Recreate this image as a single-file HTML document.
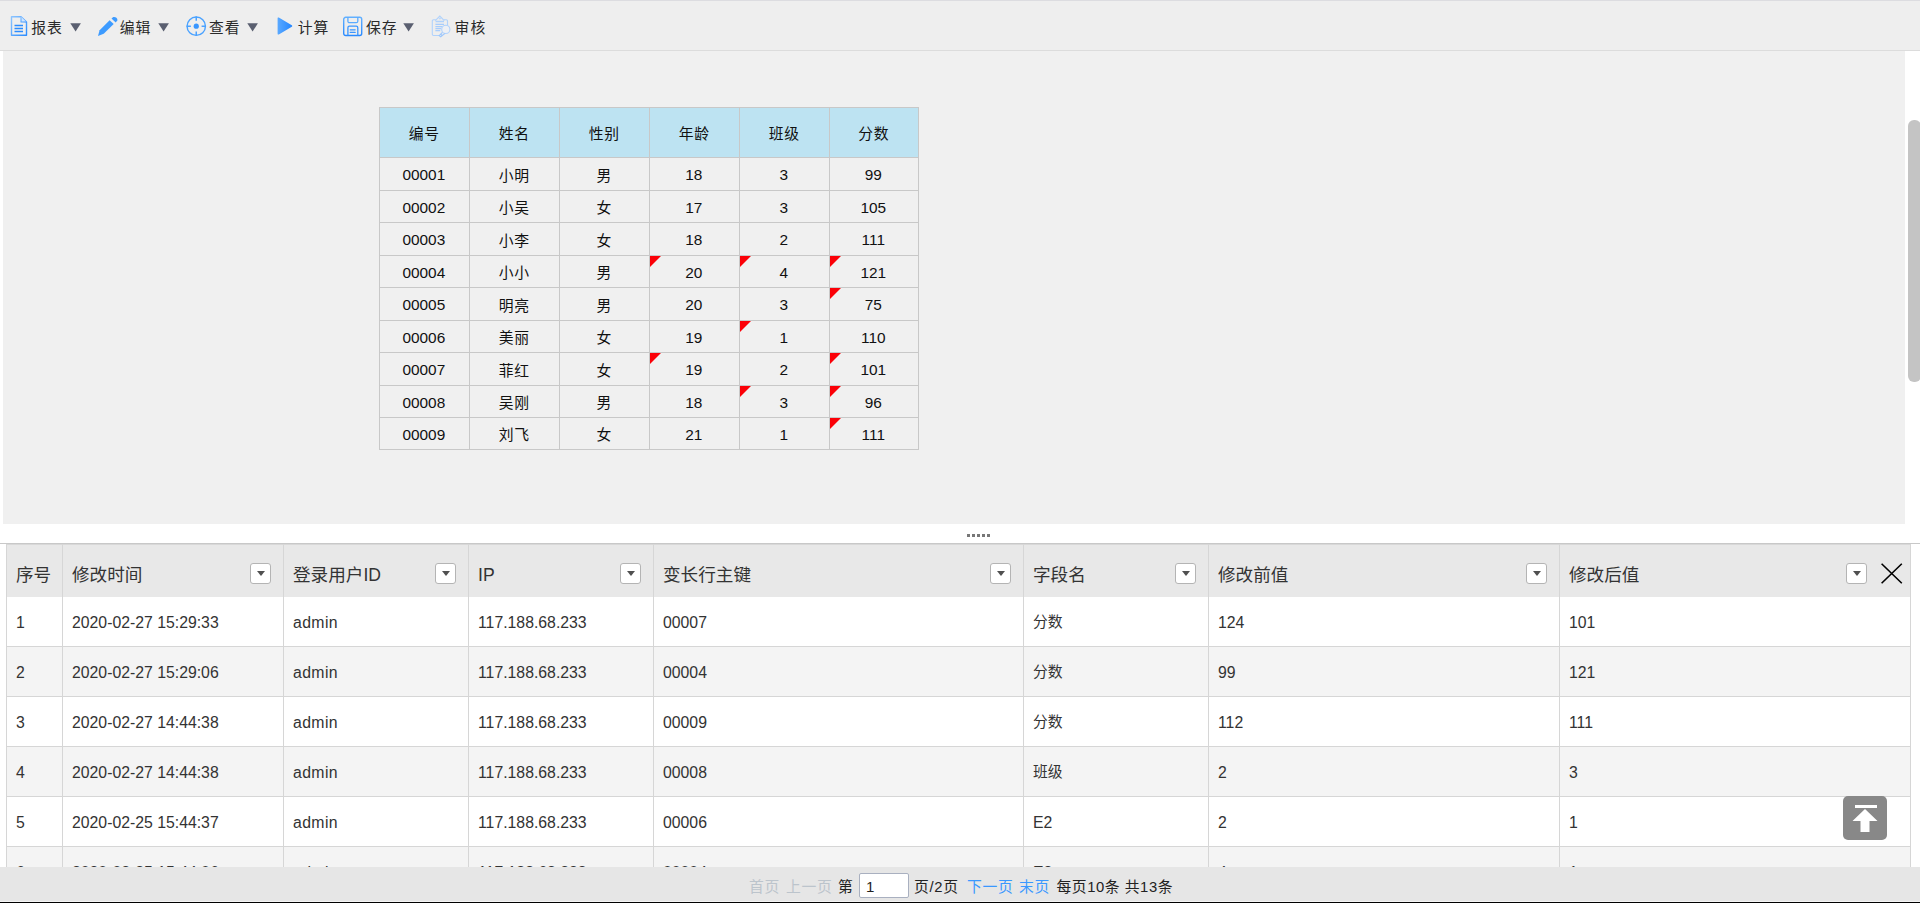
<!DOCTYPE html>
<html lang="zh-CN"><head><meta charset="utf-8"><title>报表</title>
<style>
*{box-sizing:border-box;margin:0;padding:0}
html,body{width:1920px;height:903px;overflow:hidden;background:#fff}
body{position:relative;font-family:"Liberation Sans","Noto Sans CJK SC",sans-serif;color:#222;font-size:15.4px}
.abs{position:absolute}
#topline{left:0;top:0;width:1920px;height:1px;background:#dcdce0}
#toolbar{left:0;top:1px;width:1920px;height:49px;background:#eeeeee}
#tbline{left:0;top:50px;width:1920px;height:1px;background:#dcdcdc}
.tbtxt{position:absolute;top:17.2px;height:22px;line-height:22px;font-size:14.8px;letter-spacing:1px;color:#2a2a2a;white-space:nowrap}
.tbarr{position:absolute;top:23px;width:12px;height:9px}
.ico{position:absolute}
#sheet{left:3px;top:51px;width:1902px;height:473px;background:#f0f0f0}
#thumb{left:1908px;top:120px;width:12.5px;height:262px;border-radius:6px;background:#c4c4c4}
.vl{position:absolute;width:1px;background:#c8c8c8}
.hl{position:absolute;height:1px;background:#c8c8c8}
.hc{position:absolute;background:#bde3f2}
.sc{position:absolute;text-align:center;font-size:14.8px;letter-spacing:.7px;text-indent:.7px;color:#111;white-space:nowrap}
.sc.n{font-size:15.4px;letter-spacing:0;text-indent:0}
.tri{position:absolute;width:0;height:0;border-top:11px solid #fb0007;border-right:11px solid transparent}
#dots{left:967px;top:534px}
#gline{left:0;top:543px;width:1920px;height:1px;background:#c8c8c8}
#gline2{left:6px;top:544px;width:1905px;height:1px;background:#d8d8d8}
#ghead{left:6px;top:544px;width:1905px;height:53px;background:#e8e8e8}
.gh{position:absolute;top:563px;height:24px;line-height:24px;font-size:17.6px;color:#333;white-space:nowrap}
.fb{position:absolute;top:563px;width:21px;height:21px;background:#fff;border:1px solid #b4b4b4;border-radius:3px}
.fb:after{content:"";position:absolute;left:6.2px;top:7.4px;width:0;height:0;border-left:4.7px solid transparent;border-right:4.7px solid transparent;border-top:5.6px solid #505050}
.row{position:absolute;left:7px;width:1903px;height:49px}
.row.alt{background:#f4f4f4}
.gc{position:absolute;height:22px;line-height:22px;font-size:15.8px;color:#333;white-space:nowrap}
.gc.c{font-size:14.8px;letter-spacing:.7px}
.gv{position:absolute;width:1px;background:#d6d6d6}
.gh1{position:absolute;height:1px;background:#d6d6d6;left:6px;width:1905px}
#footer{left:0;top:867px;width:1920px;height:34px;background:#e6e6e6}
#fwhite{left:0;top:901px;width:1920px;height:1px;background:#f4f4f4}
#fblack{left:0;top:902px;width:1920px;height:1px;background:#000}
.ft{position:absolute;top:876.4px;height:22px;line-height:22px;font-size:14.8px;letter-spacing:.7px;white-space:nowrap;color:#222}
#pginp{left:859px;top:873px;width:50px;height:25px;background:#fff;border:1px solid #a9b0c0;border-radius:2px;outline:none;font-family:"Liberation Sans","Noto Sans CJK SC",sans-serif;font-size:15px;color:#222;padding:2px 0 0 6px;line-height:20px}
#totop{left:1843px;top:796px;width:44px;height:44px;border-radius:5px;background:#888}
</style></head>
<body>
<header>
<div class="abs" id="topline"></div><div class="abs" id="toolbar"></div><div class="abs" id="tbline"></div>
<svg class="ico" style="left:9.6px;top:16.2px" width="18" height="20" viewBox="0 0 18 20"><defs><linearGradient id="g1" x1="0" y1="0" x2="1" y2="1"><stop offset="0" stop-color="#8cc4ff"/><stop offset="1" stop-color="#2b8cff"/></linearGradient></defs><path d="M1.5 0.8h9.5l5.5 5.2v13.2h-15z" fill="none" stroke="url(#g1)" stroke-width="1.4" stroke-linejoin="round"/><path d="M11 0.8v5.2h5.5" fill="#cfe5ff" stroke="url(#g1)" stroke-width="1.2" stroke-linejoin="round"/><path d="M4.5 9.5h8.5M4.5 12.5h8.5M4.5 15.5h8.5" stroke="#2b8cff" stroke-width="1.3"/></svg>
<svg class="ico" style="left:97px;top:16px" width="22" height="21" viewBox="0 0 22 21"><path d="M12.6 4.3L16.7 8 6.7 17.7 1 20 2.6 14.3z" fill="#3d9bff"/><path d="M14.5 2.5L16.3 1Q20 0.6 20.5 4.2L18.7 6.4z" fill="#3d9bff"/></svg>
<svg class="ico" style="left:186px;top:16px" width="21" height="21" viewBox="0 0 21 21"><circle cx="10.25" cy="10.15" r="9.2" fill="none" stroke="#4aa2ff" stroke-width="1.4"/><path d="M10.25 0.6v4.2M10.25 15.5v4.2M0.7 10.15h4.2M15.6 10.15h4.2" stroke="#4aa2ff" stroke-width="1.5"/><circle cx="10.25" cy="10.15" r="2.6" fill="#3896ff"/></svg>
<svg class="ico" style="left:277px;top:17.3px" width="16" height="18" viewBox="0 0 16 18"><defs><linearGradient id="g4" x1="0" y1="0" x2="1" y2="0"><stop offset="0" stop-color="#5aa9ff"/><stop offset="1" stop-color="#2486ff"/></linearGradient></defs><path d="M0.6 1.3a0.8 0.8 0 0 1 1.2-.7l13 7.7a0.8 0.8 0 0 1 0 1.4l-13 7.7a0.8 0.8 0 0 1-1.2-.7z" fill="url(#g4)"/></svg>
<svg class="ico" style="left:343px;top:16px" width="20" height="21" viewBox="0 0 20 21"><defs><linearGradient id="g5" x1="0" y1="0" x2="0" y2="1"><stop offset="0" stop-color="#62b0ff"/><stop offset="1" stop-color="#2a8aff"/></linearGradient></defs><rect x="0.7" y="1.3" width="18" height="18.2" rx="2" fill="none" stroke="url(#g5)" stroke-width="1.4"/><path d="M4.9 1.3v3.9a1.5 1.5 0 0 0 1.5 1.5h6.9a1.5 1.5 0 0 0 1.5-1.5V1.3" fill="none" stroke="#5aabff" stroke-width="1.3"/><path d="M4.9 19.5v-7.8a1.5 1.5 0 0 1 1.5-1.5h6.9a1.5 1.5 0 0 1 1.5 1.5v7.8" fill="none" stroke="#3a96ff" stroke-width="1.3"/><path d="M7.2 13.8h5M7.2 16.4h5" stroke="#3a96ff" stroke-width="1.2" stroke-linecap="round"/></svg>
<svg class="ico" style="left:431px;top:15px" width="22" height="23" viewBox="0 0 22 23" opacity="0.85"><g fill="none" stroke="#a6ceff" stroke-width="1.1"><path d="M4.8 4.7H2.5a1.2 1.2 0 0 0-1.2 1.2v13.4a1.2 1.2 0 0 0 1.2 1.2h6"/><path d="M13 4.7h2.3a1.2 1.2 0 0 1 1.2 1.2v4"/><path d="M4.3 5.7L8.8 1.1l4.5 4.6"/><path d="M4.6 6.5h8.4" stroke-width="1.5"/><path d="M8 3.8l.8-1 .8 1z" stroke-width=".8"/><path d="M4.4 9.4h8.6M4.4 11.6h6.6M4.4 13.6h5.6M4.4 15.6h4.8" stroke="#9cc8ff"/><circle cx="14.8" cy="14.4" r="4.1" fill="#eef1f6"/><path d="M11.4 17.3l-3.2 3.3 1.5 1.1 4.3-3.3M9.6 19.2l1.6 1.2" stroke="#8fc0ff"/></g></svg>
<div class="tbtxt" style="left:31.3px">报表</div>
<div class="tbtxt" style="left:119.8px">编辑</div>
<div class="tbtxt" style="left:209px">查看</div>
<div class="tbtxt" style="left:297.8px">计算</div>
<div class="tbtxt" style="left:366px">保存</div>
<div class="tbtxt" style="left:454.6px">审核</div>
<svg class="tbarr" style="left:70px" viewBox="0 0 12 9"><path d="M0.3 0.2h10.6L5.6 8.6z" fill="#5a5f70"/></svg>
<svg class="tbarr" style="left:158px" viewBox="0 0 12 9"><path d="M0.3 0.2h10.6L5.6 8.6z" fill="#5a5f70"/></svg>
<svg class="tbarr" style="left:247px" viewBox="0 0 12 9"><path d="M0.3 0.2h10.6L5.6 8.6z" fill="#5a5f70"/></svg>
<svg class="tbarr" style="left:403px" viewBox="0 0 12 9"><path d="M0.3 0.2h10.6L5.6 8.6z" fill="#5a5f70"/></svg>
</header>
<main>
<div class="abs" id="sheet"></div><div class="abs" id="thumb"></div>
<div class="hc" style="left:379px;top:107px;width:539px;height:50px"></div>
<div class="vl" style="left:379px;top:107px;height:343px"></div>
<div class="vl" style="left:469px;top:107px;height:343px"></div>
<div class="vl" style="left:559px;top:107px;height:343px"></div>
<div class="vl" style="left:649px;top:107px;height:343px"></div>
<div class="vl" style="left:739px;top:107px;height:343px"></div>
<div class="vl" style="left:829px;top:107px;height:343px"></div>
<div class="vl" style="left:918px;top:107px;height:343px"></div>
<div class="hl" style="left:379px;top:107px;width:540px"></div>
<div class="hl" style="left:379px;top:157px;width:540px"></div>
<div class="hl" style="left:379px;top:190px;width:540px"></div>
<div class="hl" style="left:379px;top:222px;width:540px"></div>
<div class="hl" style="left:379px;top:255px;width:540px"></div>
<div class="hl" style="left:379px;top:287px;width:540px"></div>
<div class="hl" style="left:379px;top:320px;width:540px"></div>
<div class="hl" style="left:379px;top:352px;width:540px"></div>
<div class="hl" style="left:379px;top:385px;width:540px"></div>
<div class="hl" style="left:379px;top:417px;width:540px"></div>
<div class="hl" style="left:379px;top:449px;width:540px"></div>
<div class="sc" style="left:379.3px;top:108px;width:89px;height:49px;line-height:53px">编号</div>
<div class="sc" style="left:469.3px;top:108px;width:89px;height:49px;line-height:53px">姓名</div>
<div class="sc" style="left:559.3px;top:108px;width:89px;height:49px;line-height:53px">性别</div>
<div class="sc" style="left:649.3px;top:108px;width:89px;height:49px;line-height:53px">年龄</div>
<div class="sc" style="left:739.3px;top:108px;width:89px;height:49px;line-height:53px">班级</div>
<div class="sc" style="left:829.3px;top:108px;width:88px;height:49px;line-height:53px">分数</div>
<div class="sc n" style="left:379.3px;top:158px;width:89px;height:32px;line-height:34px">00001</div>
<div class="sc" style="left:469.3px;top:158px;width:89px;height:32px;line-height:36px">小明</div>
<div class="sc" style="left:559.3px;top:158px;width:89px;height:32px;line-height:36px">男</div>
<div class="sc n" style="left:649.3px;top:158px;width:89px;height:32px;line-height:34px">18</div>
<div class="sc n" style="left:739.3px;top:158px;width:89px;height:32px;line-height:34px">3</div>
<div class="sc n" style="left:829.3px;top:158px;width:88px;height:32px;line-height:34px">99</div>
<div class="sc n" style="left:379.3px;top:191px;width:89px;height:31px;line-height:33px">00002</div>
<div class="sc" style="left:469.3px;top:191px;width:89px;height:31px;line-height:35px">小吴</div>
<div class="sc" style="left:559.3px;top:191px;width:89px;height:31px;line-height:35px">女</div>
<div class="sc n" style="left:649.3px;top:191px;width:89px;height:31px;line-height:33px">17</div>
<div class="sc n" style="left:739.3px;top:191px;width:89px;height:31px;line-height:33px">3</div>
<div class="sc n" style="left:829.3px;top:191px;width:88px;height:31px;line-height:33px">105</div>
<div class="sc n" style="left:379.3px;top:223px;width:89px;height:32px;line-height:34px">00003</div>
<div class="sc" style="left:469.3px;top:223px;width:89px;height:32px;line-height:36px">小李</div>
<div class="sc" style="left:559.3px;top:223px;width:89px;height:32px;line-height:36px">女</div>
<div class="sc n" style="left:649.3px;top:223px;width:89px;height:32px;line-height:34px">18</div>
<div class="sc n" style="left:739.3px;top:223px;width:89px;height:32px;line-height:34px">2</div>
<div class="sc n" style="left:829.3px;top:223px;width:88px;height:32px;line-height:34px">111</div>
<div class="sc n" style="left:379.3px;top:256px;width:89px;height:31px;line-height:33px">00004</div>
<div class="sc" style="left:469.3px;top:256px;width:89px;height:31px;line-height:35px">小小</div>
<div class="sc" style="left:559.3px;top:256px;width:89px;height:31px;line-height:35px">男</div>
<div class="sc n" style="left:649.3px;top:256px;width:89px;height:31px;line-height:33px">20</div>
<div class="tri" style="left:650px;top:256px"></div>
<div class="sc n" style="left:739.3px;top:256px;width:89px;height:31px;line-height:33px">4</div>
<div class="tri" style="left:740px;top:256px"></div>
<div class="sc n" style="left:829.3px;top:256px;width:88px;height:31px;line-height:33px">121</div>
<div class="tri" style="left:830px;top:256px"></div>
<div class="sc n" style="left:379.3px;top:288px;width:89px;height:32px;line-height:34px">00005</div>
<div class="sc" style="left:469.3px;top:288px;width:89px;height:32px;line-height:36px">明亮</div>
<div class="sc" style="left:559.3px;top:288px;width:89px;height:32px;line-height:36px">男</div>
<div class="sc n" style="left:649.3px;top:288px;width:89px;height:32px;line-height:34px">20</div>
<div class="sc n" style="left:739.3px;top:288px;width:89px;height:32px;line-height:34px">3</div>
<div class="sc n" style="left:829.3px;top:288px;width:88px;height:32px;line-height:34px">75</div>
<div class="tri" style="left:830px;top:288px"></div>
<div class="sc n" style="left:379.3px;top:321px;width:89px;height:31px;line-height:33px">00006</div>
<div class="sc" style="left:469.3px;top:321px;width:89px;height:31px;line-height:35px">美丽</div>
<div class="sc" style="left:559.3px;top:321px;width:89px;height:31px;line-height:35px">女</div>
<div class="sc n" style="left:649.3px;top:321px;width:89px;height:31px;line-height:33px">19</div>
<div class="sc n" style="left:739.3px;top:321px;width:89px;height:31px;line-height:33px">1</div>
<div class="tri" style="left:740px;top:321px"></div>
<div class="sc n" style="left:829.3px;top:321px;width:88px;height:31px;line-height:33px">110</div>
<div class="sc n" style="left:379.3px;top:353px;width:89px;height:32px;line-height:34px">00007</div>
<div class="sc" style="left:469.3px;top:353px;width:89px;height:32px;line-height:36px">菲红</div>
<div class="sc" style="left:559.3px;top:353px;width:89px;height:32px;line-height:36px">女</div>
<div class="sc n" style="left:649.3px;top:353px;width:89px;height:32px;line-height:34px">19</div>
<div class="tri" style="left:650px;top:353px"></div>
<div class="sc n" style="left:739.3px;top:353px;width:89px;height:32px;line-height:34px">2</div>
<div class="sc n" style="left:829.3px;top:353px;width:88px;height:32px;line-height:34px">101</div>
<div class="tri" style="left:830px;top:353px"></div>
<div class="sc n" style="left:379.3px;top:386px;width:89px;height:31px;line-height:33px">00008</div>
<div class="sc" style="left:469.3px;top:386px;width:89px;height:31px;line-height:35px">吴刚</div>
<div class="sc" style="left:559.3px;top:386px;width:89px;height:31px;line-height:35px">男</div>
<div class="sc n" style="left:649.3px;top:386px;width:89px;height:31px;line-height:33px">18</div>
<div class="sc n" style="left:739.3px;top:386px;width:89px;height:31px;line-height:33px">3</div>
<div class="tri" style="left:740px;top:386px"></div>
<div class="sc n" style="left:829.3px;top:386px;width:88px;height:31px;line-height:33px">96</div>
<div class="tri" style="left:830px;top:386px"></div>
<div class="sc n" style="left:379.3px;top:418px;width:89px;height:31px;line-height:33px">00009</div>
<div class="sc" style="left:469.3px;top:418px;width:89px;height:31px;line-height:35px">刘飞</div>
<div class="sc" style="left:559.3px;top:418px;width:89px;height:31px;line-height:35px">女</div>
<div class="sc n" style="left:649.3px;top:418px;width:89px;height:31px;line-height:33px">21</div>
<div class="sc n" style="left:739.3px;top:418px;width:89px;height:31px;line-height:33px">1</div>
<div class="sc n" style="left:829.3px;top:418px;width:88px;height:31px;line-height:33px">111</div>
<div class="tri" style="left:830px;top:418px"></div>
</main>
<section>
<svg class="abs" id="dots" width="24" height="4" viewBox="0 0 24 4"><rect x="0" y="0" width="3" height="3" fill="#777"/><rect x="5" y="0" width="3" height="3" fill="#777"/><rect x="10" y="0" width="3" height="3" fill="#777"/><rect x="15" y="0" width="3" height="3" fill="#777"/><rect x="20" y="0" width="3" height="3" fill="#777"/></svg>
<div class="abs" id="gline"></div><div class="abs" id="ghead"></div><div class="abs" id="gline2"></div>
<div class="row" style="top:597px"></div>
<div class="gh1" style="top:646px"></div>
<div class="row alt" style="top:647px"></div>
<div class="gh1" style="top:696px"></div>
<div class="row" style="top:697px"></div>
<div class="gh1" style="top:746px"></div>
<div class="row alt" style="top:747px"></div>
<div class="gh1" style="top:796px"></div>
<div class="row" style="top:797px"></div>
<div class="gh1" style="top:846px"></div>
<div class="row alt" style="top:847px"></div>
<div class="gh1" style="top:896px"></div>
<div class="gv" style="left:6px;top:544px;height:330px"></div>
<div class="gv" style="left:62px;top:544px;height:330px"></div>
<div class="gv" style="left:283px;top:544px;height:330px"></div>
<div class="gv" style="left:468px;top:544px;height:330px"></div>
<div class="gv" style="left:653px;top:544px;height:330px"></div>
<div class="gv" style="left:1023px;top:544px;height:330px"></div>
<div class="gv" style="left:1208px;top:544px;height:330px"></div>
<div class="gv" style="left:1559px;top:544px;height:330px"></div>
<div class="gv" style="left:1910px;top:544px;height:330px"></div>
<div class="gh" style="left:16px">序号</div>
<div class="gh" style="left:72px">修改时间</div>
<div class="fb" style="left:250px"></div>
<div class="gh" style="left:293px">登录用户ID</div>
<div class="fb" style="left:435px"></div>
<div class="gh" style="left:478px">IP</div>
<div class="fb" style="left:620px"></div>
<div class="gh" style="left:663px">变长行主键</div>
<div class="fb" style="left:990px"></div>
<div class="gh" style="left:1033px">字段名</div>
<div class="fb" style="left:1175px"></div>
<div class="gh" style="left:1218px">修改前值</div>
<div class="fb" style="left:1526px"></div>
<div class="gh" style="left:1569px">修改后值</div>
<div class="fb" style="left:1846px"></div>
<div class="gc" style="left:16px;top:612px;letter-spacing:0">1</div>
<div class="gc" style="left:72px;top:612px;letter-spacing:0">2020-02-27 15:29:33</div>
<div class="gc" style="left:293px;top:612px;letter-spacing:0.4px">admin</div>
<div class="gc" style="left:478px;top:612px;letter-spacing:0">117.188.68.233</div>
<div class="gc" style="left:663px;top:612px;letter-spacing:0">00007</div>
<div class="gc c" style="left:1033px;top:611.3px;letter-spacing:0">分数</div>
<div class="gc" style="left:1218px;top:612px;letter-spacing:0">124</div>
<div class="gc" style="left:1569px;top:612px;letter-spacing:0">101</div>
<div class="gc" style="left:16px;top:662px;letter-spacing:0">2</div>
<div class="gc" style="left:72px;top:662px;letter-spacing:0">2020-02-27 15:29:06</div>
<div class="gc" style="left:293px;top:662px;letter-spacing:0.4px">admin</div>
<div class="gc" style="left:478px;top:662px;letter-spacing:0">117.188.68.233</div>
<div class="gc" style="left:663px;top:662px;letter-spacing:0">00004</div>
<div class="gc c" style="left:1033px;top:661.3px;letter-spacing:0">分数</div>
<div class="gc" style="left:1218px;top:662px;letter-spacing:0">99</div>
<div class="gc" style="left:1569px;top:662px;letter-spacing:0">121</div>
<div class="gc" style="left:16px;top:712px;letter-spacing:0">3</div>
<div class="gc" style="left:72px;top:712px;letter-spacing:0">2020-02-27 14:44:38</div>
<div class="gc" style="left:293px;top:712px;letter-spacing:0.4px">admin</div>
<div class="gc" style="left:478px;top:712px;letter-spacing:0">117.188.68.233</div>
<div class="gc" style="left:663px;top:712px;letter-spacing:0">00009</div>
<div class="gc c" style="left:1033px;top:711.3px;letter-spacing:0">分数</div>
<div class="gc" style="left:1218px;top:712px;letter-spacing:0">112</div>
<div class="gc" style="left:1569px;top:712px;letter-spacing:0">111</div>
<div class="gc" style="left:16px;top:762px;letter-spacing:0">4</div>
<div class="gc" style="left:72px;top:762px;letter-spacing:0">2020-02-27 14:44:38</div>
<div class="gc" style="left:293px;top:762px;letter-spacing:0.4px">admin</div>
<div class="gc" style="left:478px;top:762px;letter-spacing:0">117.188.68.233</div>
<div class="gc" style="left:663px;top:762px;letter-spacing:0">00008</div>
<div class="gc c" style="left:1033px;top:761.3px;letter-spacing:0">班级</div>
<div class="gc" style="left:1218px;top:762px;letter-spacing:0">2</div>
<div class="gc" style="left:1569px;top:762px;letter-spacing:0">3</div>
<div class="gc" style="left:16px;top:812px;letter-spacing:0">5</div>
<div class="gc" style="left:72px;top:812px;letter-spacing:0">2020-02-25 15:44:37</div>
<div class="gc" style="left:293px;top:812px;letter-spacing:0.4px">admin</div>
<div class="gc" style="left:478px;top:812px;letter-spacing:0">117.188.68.233</div>
<div class="gc" style="left:663px;top:812px;letter-spacing:0">00006</div>
<div class="gc" style="left:1033px;top:812px;letter-spacing:0">E2</div>
<div class="gc" style="left:1218px;top:812px;letter-spacing:0">2</div>
<div class="gc" style="left:1569px;top:812px;letter-spacing:0">1</div>
<div class="gc" style="left:16px;top:862px;letter-spacing:0">6</div>
<div class="gc" style="left:72px;top:862px;letter-spacing:0">2020-02-25 15:44:06</div>
<div class="gc" style="left:293px;top:862px;letter-spacing:0.4px">admin</div>
<div class="gc" style="left:478px;top:862px;letter-spacing:0">117.188.68.233</div>
<div class="gc" style="left:663px;top:862px;letter-spacing:0">00004</div>
<div class="gc" style="left:1033px;top:862px;letter-spacing:0">E2</div>
<div class="gc" style="left:1218px;top:862px;letter-spacing:0">4</div>
<div class="gc" style="left:1569px;top:862px;letter-spacing:0">1</div>
<svg class="abs" style="left:1880px;top:562px" width="23" height="23" viewBox="0 0 23 23"><path d="M1.6 1.7L21.8 21.3M21.8 1.7L1.6 21.3" stroke="#000" stroke-width="1.6" fill="none"/></svg>
<div class="abs" id="totop"><svg width="44" height="44" viewBox="0 0 44 44"><rect x="12" y="9" width="22" height="3" fill="#fff"/><path d="M22 13l12.5 12h-8v11h-9V25h-8z" fill="#fff"/></svg></div>
</section>
<footer>
<div class="abs" id="footer"></div><div class="abs" id="fwhite"></div><div class="abs" id="fblack"></div>
<div class="ft" style="left:749px;color:#bcc4cc">首页</div>
<div class="ft" style="left:786px;color:#bcc4cc">上一页</div>
<div class="ft" style="left:838px">第</div>
<input class="abs" id="pginp" type="text" value="1">
<div class="ft" style="left:914px">页/2页</div>
<div class="ft" style="left:967px;color:#3a98ff">下一页</div>
<div class="ft" style="left:1019px;color:#3a98ff">末页</div>
<div class="ft" style="left:1056.5px;letter-spacing:.55px">每页10条 共13条</div>
</footer>
</body></html>
